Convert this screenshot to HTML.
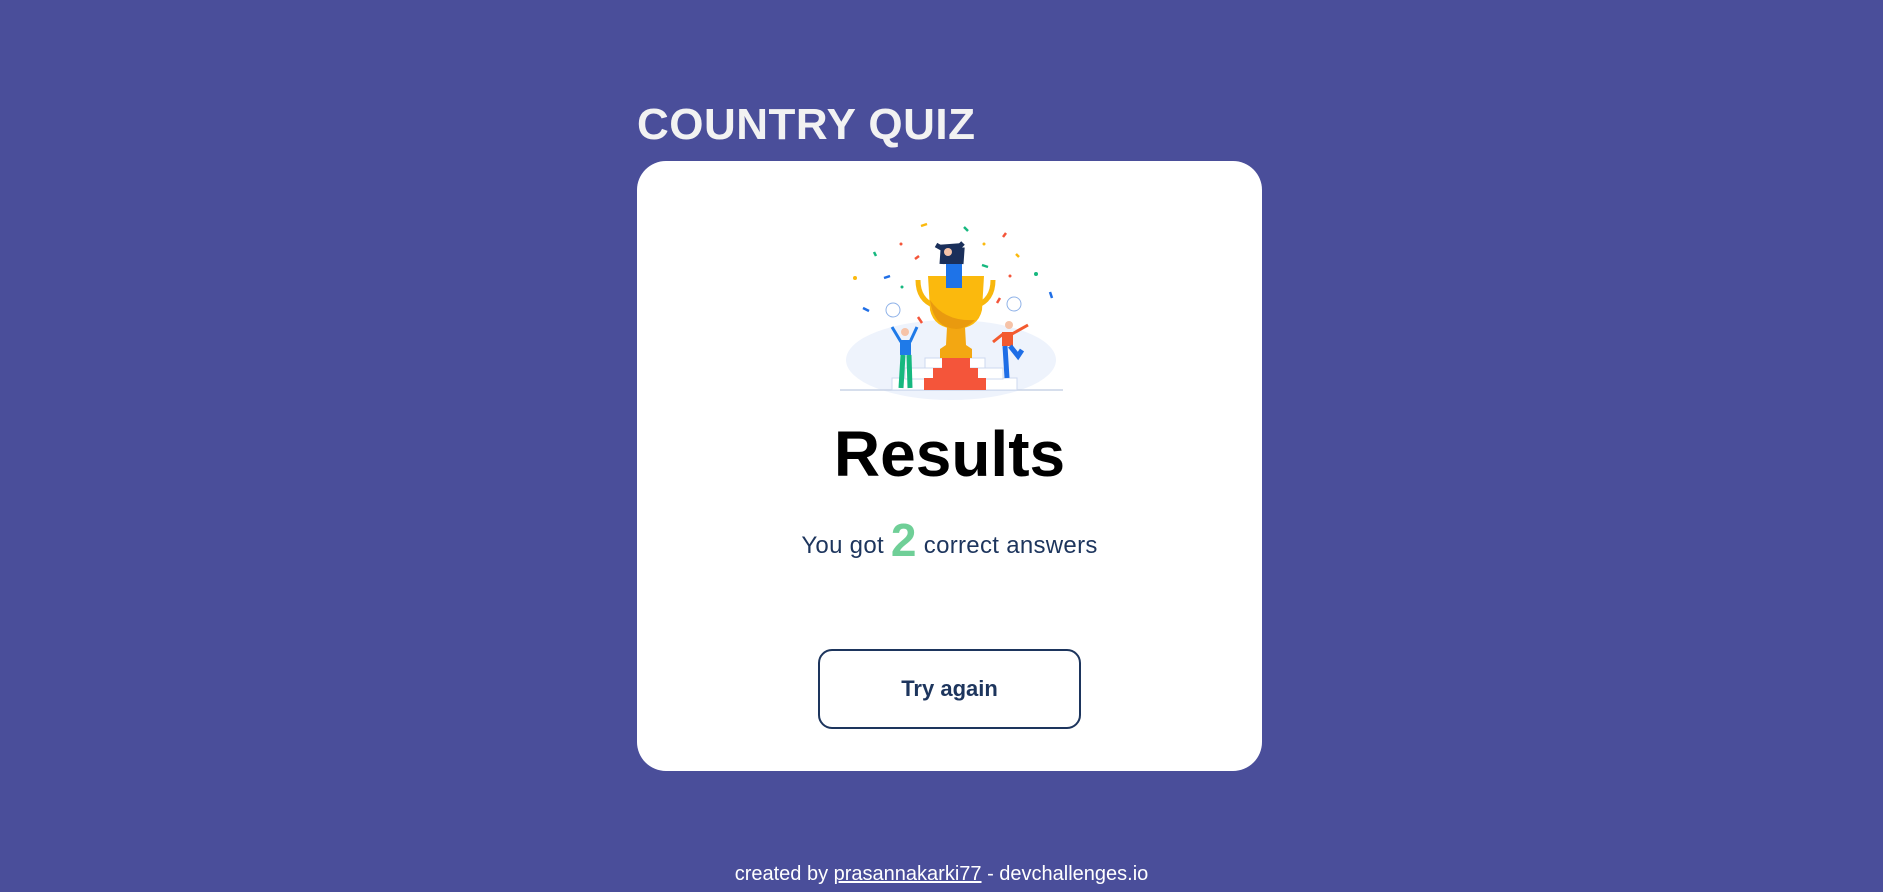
<!DOCTYPE html>
<html><head><meta charset="utf-8"><style>
*{margin:0;padding:0;box-sizing:border-box}
html,body{width:1883px;height:892px;overflow:hidden;background:#4a4e9a;font-family:"Liberation Sans",sans-serif}
.title{position:absolute;left:637px;top:100px;font-size:44px;font-weight:bold;color:#f2f2f2;letter-spacing:0.5px}
.card{position:absolute;left:637px;top:161px;width:625px;height:610px;background:#fff;border-radius:29px}
.res{position:absolute;left:0;width:100%;top:261px;text-align:center;font-size:64px;font-weight:bold;color:#000;line-height:1}
.sub{position:absolute;left:0;width:100%;top:352px;text-align:center;font-size:24px;color:#1d355d;line-height:54px;white-space:nowrap;letter-spacing:0.3px}
.sub b{font-size:46px;color:#6fcf97;vertical-align:-3px}
.btn{position:absolute;left:818px;top:649px;width:263px;height:80px;border:2px solid #1d355d;border-radius:14px;text-align:center;line-height:76px;font-size:22px;font-weight:bold;color:#1d355d}
.foot{position:absolute;left:0;width:100%;top:863px;text-align:center;font-size:20px;color:#fff}
.foot u{text-decoration:underline}
</style></head><body>
<div class="title">COUNTRY QUIZ</div>
<div class="card"></div>
<svg style="position:absolute;left:0;top:0" width="1883" height="892">
<ellipse cx="951" cy="360" rx="105" ry="40" fill="#eef3fc"/>
<line x1="840" y1="390" x2="1063" y2="390" stroke="#c9d3e6" stroke-width="1.5"/>
<rect x="892" y="378" width="125" height="12" fill="#fff" stroke="#cdd8ef"/>
<rect x="905" y="368" width="98" height="11" fill="#fff" stroke="#cdd8ef"/>
<rect x="925" y="358" width="60" height="10" fill="#fff" stroke="#cdd8ef"/>
<rect x="924" y="378" width="62" height="12" fill="#f4553a"/>
<rect x="933" y="368" width="45" height="10" fill="#f4553a"/>
<rect x="942" y="358" width="28" height="10" fill="#f4553a"/>
<path d="M947 327 L965 327 L966 345 L972 349 L972 358 L940 358 L940 349 L946 345Z" fill="#f3a712"/>
<path d="M918 280 Q918 300 935 306 M993 280 Q993 300 976 306" stroke="#f8b70d" stroke-width="5" fill="none"/>
<path d="M928 276 L984 276 L982 310 Q978 328 956 329 Q934 328 930 310Z" fill="#fbb90d"/>
<path d="M930 300 Q945 322 975 320 Q966 329 956 329 Q934 328 930 300Z" fill="#e99a0f"/>
<rect x="946" y="263" width="16" height="25" fill="#1e73e8"/>
<path d="M936 245 L945 250 L955 251 L963 243 M942 264 L943 250 L962 250 L961 264" stroke="#1a2f5a" stroke-width="5" fill="#1a2f5a"/>
<circle cx="948" cy="252" r="4" fill="#f6c3a8"/>
<rect x="900" y="340" width="11" height="15" fill="#1f7ae8"/>
<path d="M903 355 L901 388 M909 355 L910 388" stroke="#16b87f" stroke-width="5"/>
<path d="M901 342 L892 327 M910 342 L917 327" stroke="#1f7ae8" stroke-width="3"/>
<circle cx="905" cy="332" r="4" fill="#f6c3a8"/>
<circle cx="893" cy="310" r="7" fill="#fff" stroke="#8fb2e8"/>
<rect x="1002" y="332" width="11" height="14" fill="#f35a2f"/>
<path d="M1005 346 L1007 378 M1010 346 L1018 356 L1022 350" stroke="#1f6ee6" stroke-width="5" fill="none"/>
<path d="M1003 334 L993 342 M1012 334 L1028 325" stroke="#f35a2f" stroke-width="3"/>
<circle cx="1009" cy="325" r="4" fill="#f6c3a8"/>
<circle cx="1014" cy="304" r="7" fill="#fff" stroke="#8fb2e8"/>
<g stroke-width="2.5" fill="none">
<path d="M921 226 l6 -2" stroke="#fbb90d"/><path d="M964 227 l4 4" stroke="#16b87f"/>
<path d="M1003 237 l3 -4" stroke="#f4553a"/><path d="M874 252 l2 4" stroke="#16b87f"/>
<path d="M884 278 l6 -2" stroke="#1f6ee6"/><path d="M915 259 l4 -3" stroke="#f4553a"/>
<path d="M982 265 l6 2" stroke="#16b87f"/><path d="M1016 254 l3 3" stroke="#fbb90d"/>
<path d="M863 308 l6 3" stroke="#1f6ee6"/><path d="M1050 292 l2 6" stroke="#1f6ee6"/>
<path d="M1000 298 l-3 5" stroke="#f4553a"/><path d="M918 317 l4 6" stroke="#f4553a"/>
</g>
<g fill="#f4553a"><circle cx="901" cy="244" r="1.5"/><circle cx="1010" cy="276" r="1.5"/></g>
<g fill="#fbb90d"><circle cx="855" cy="278" r="2"/><circle cx="984" cy="244" r="1.5"/></g>
<g fill="#16b87f"><circle cx="902" cy="287" r="1.5"/><circle cx="1036" cy="274" r="2"/></g>
</svg>
<div class="card" style="background:none">
<div class="res">Results</div>
<div class="sub">You got <b>2</b> correct answers</div>
</div>
<div class="btn">Try again</div>
<div class="foot">created by <u>prasannakarki77</u> - devchallenges.io</div>
</body></html>
